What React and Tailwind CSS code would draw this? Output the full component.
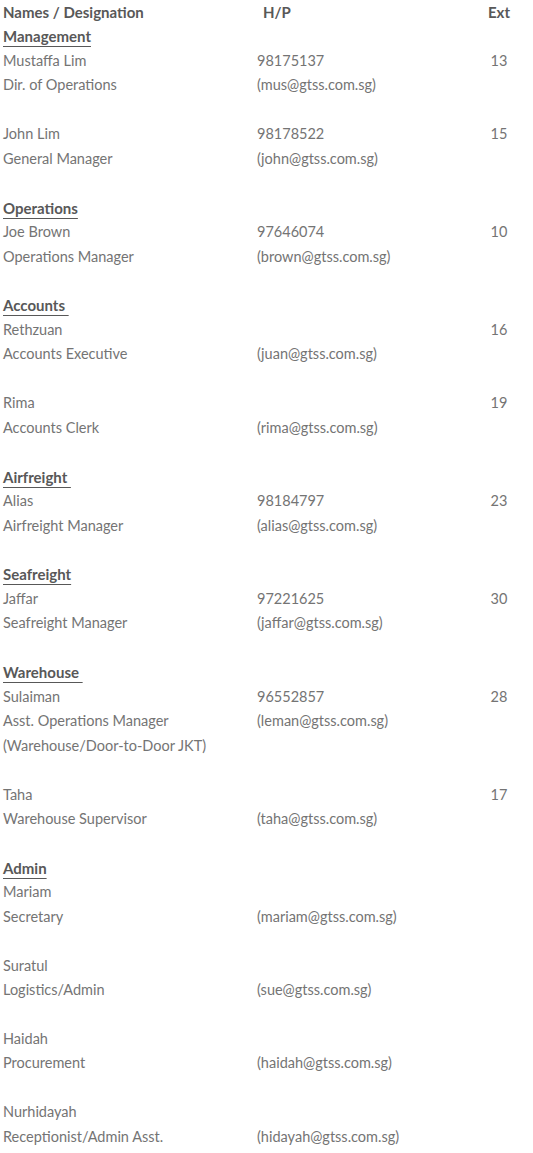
const rows = [
  { type: 'section', name: 'Management' },
  { name: 'Mustaffa Lim', hp: '98175137', ext: '13' },
  { name: 'Dir. of Operations', hp: '(mus@gtss.com.sg)' },
  { type: 'blank' },
  { name: 'John Lim', hp: '98178522', ext: '15' },
  { name: 'General Manager', hp: '(john@gtss.com.sg)' },
  { type: 'blank' },
  { type: 'section', name: 'Operations' },
  { name: 'Joe Brown', hp: '97646074', ext: '10' },
  { name: 'Operations Manager', hp: '(brown@gtss.com.sg)' },
  { type: 'blank' },
  { type: 'section', name: 'Accounts ' },
  { name: 'Rethzuan', ext: '16' },
  { name: 'Accounts Executive', hp: '(juan@gtss.com.sg)' },
  { type: 'blank' },
  { name: 'Rima', ext: '19' },
  { name: 'Accounts Clerk', hp: '(rima@gtss.com.sg)' },
  { type: 'blank' },
  { type: 'section', name: 'Airfreight ' },
  { name: 'Alias', hp: '98184797', ext: '23' },
  { name: 'Airfreight Manager', hp: '(alias@gtss.com.sg)' },
  { type: 'blank' },
  { type: 'section', name: 'Seafreight' },
  { name: 'Jaffar', hp: '97221625', ext: '30' },
  { name: 'Seafreight Manager', hp: '(jaffar@gtss.com.sg)' },
  { type: 'blank' },
  { type: 'section', name: 'Warehouse ' },
  { name: 'Sulaiman', hp: '96552857', ext: '28' },
  { name: 'Asst. Operations Manager', hp: '(leman@gtss.com.sg)' },
  { name: '(Warehouse/Door-to-Door JKT)' },
  { type: 'blank' },
  { name: 'Taha', ext: '17' },
  { name: 'Warehouse Supervisor', hp: '(taha@gtss.com.sg)' },
  { type: 'blank' },
  { type: 'section', name: 'Admin' },
  { name: 'Mariam' },
  { name: 'Secretary', hp: '(mariam@gtss.com.sg)' },
  { type: 'blank' },
  { name: 'Suratul' },
  { name: 'Logistics/Admin', hp: '(sue@gtss.com.sg)' },
  { type: 'blank' },
  { name: 'Haidah' },
  { name: 'Procurement', hp: '(haidah@gtss.com.sg)' },
  { type: 'blank' },
  { name: 'Nurhidayah' },
  { name: 'Receptionist/Admin Asst.', hp: '(hidayah@gtss.com.sg)' },
]

const grid = 'grid grid-cols-[254px_217px_50px] h-[24.46px] items-center'

export default function App() {
  return (
    <div className="w-[533px] bg-white pl-[3px] font-['Lato',sans-serif] text-[14.5px] leading-[24.46px] text-[#747474]">
      <div className={grid + ' font-bold text-[15px] text-[#585858]'}>
        <div>Names / Designation</div>
        <div className="pl-[6px]">H/P</div>
        <div className="text-center">Ext</div>
      </div>
      {rows.map((r, i) => {
        if (r.type === 'blank') return <div key={i} className="h-[24.46px]" />
        if (r.type === 'section')
          return (
            <div key={i} className={grid}>
              <div className="font-bold text-[15px] text-[#585858] whitespace-pre">
                <span className="underline decoration-1 underline-offset-[4px]">{r.name}</span>
              </div>
            </div>
          )
        return (
          <div key={i} className={grid}>
            <div className="whitespace-nowrap">{r.name}</div>
            <div>{r.hp}</div>
            <div className="text-center">{r.ext}</div>
          </div>
        )
      })}
    </div>
  )
}
